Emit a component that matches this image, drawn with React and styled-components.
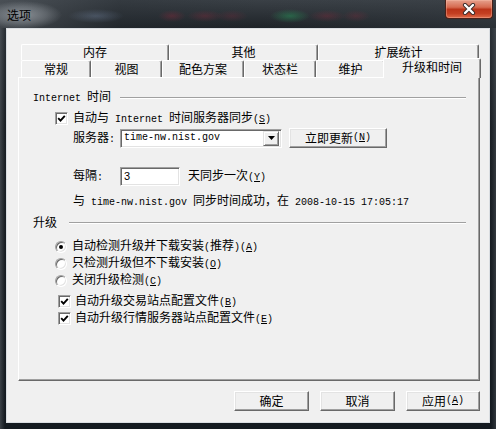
import styled, { createGlobalStyle } from 'styled-components';

const GlobalStyle = createGlobalStyle`
  html, body {
    margin: 0;
    padding: 0;
    background: #1a1f24;
  }
  body {
    font-family: "Noto Sans CJK SC", "Liberation Sans", sans-serif;
    font-size: 12px;
    color: #000;
  }
`

const topTabs = [
  { label: '内存', w: 148 },
  { label: '其他', w: 149 },
  { label: '扩展统计', w: 161 },
];

const frontTabs = [
  { label: '常规', w: 70 },
  { label: '视图', w: 71 },
  { label: '配色方案', w: 82 },
  { label: '状态栏', w: 72 },
  { label: '维护', w: 69 },
  { label: '升级和时间', w: 98, selected: true },
];

function Key({ k }) {
  return (
    <Mono>(<u>{k}</u>)</Mono>
  );
}

function Check({ checked }) {
  return (
    <CheckBox>
      {checked && (
        <svg width="9" height="9" viewBox="0 0 9 9">
          <polyline points="1.2,4.2 3.5,6.6 7.8,1.8" fill="none" stroke="#000" strokeWidth="1.9" />
        </svg>
      )}
    </CheckBox>
  );
}

function App() {
  return (
    <>
      <GlobalStyle />
      <Window>
        <TitleBar>
          <Title>选项</Title>
          <CloseButton>
            <svg width="16" height="12" viewBox="0 0 16 12">
              <path d="M4 2 L12 10 M12 2 L4 10" stroke="#3a2a28" strokeWidth="4.2" strokeLinecap="round" />
              <path d="M4 2 L12 10 M12 2 L4 10" stroke="#fff" strokeWidth="2.4" strokeLinecap="round" />
            </svg>
          </CloseButton>
        </TitleBar>
        <Client>
          <TabRow $h={16}>
            {topTabs.map(t => (
              <Tab key={t.label} $w={t.w} $h={16}>{t.label}</Tab>
            ))}
          </TabRow>
          <TabRow $h={17}>
            {frontTabs.map(t => (
              <Tab key={t.label} $w={t.w} $h={17} $selected={t.selected}>{t.label}</Tab>
            ))}
          </TabRow>
          <Panel>
            <GroupHeader>
              <span><Mono>Internet </Mono>时间</span>
              <Rule $gap={9} />
            </GroupHeader>

            <Row $indent={36} $h={16} $mt={5} $gap={5}>
              <Check checked />
              <span>自动与<Mono> Internet </Mono>时间服务器同步<Key k="S" /></span>
            </Row>

            <Row $indent={54} $h={20} $mt={2}>
              <FieldLabel>服务器<Mono>:</Mono></FieldLabel>
              <Combo>
                <ComboText>time-nw.nist.gov</ComboText>
                <DropButton>
                  <svg width="7" height="4" viewBox="0 0 7 4">
                    <polygon points="0,0 7,0 3.5,4" fill="#000" />
                  </svg>
                </DropButton>
              </Combo>
              <PushButton $w={98} $ml={7}>立即更新<Key k="N" /></PushButton>
            </Row>

            <Row $indent={54} $h={20} $mt={18}>
              <FieldLabel>每隔<Mono>:</Mono></FieldLabel>
              <TextInput>3</TextInput>
              <Suffix>天同步一次<Key k="Y" /></Suffix>
            </Row>

            <Row $indent={54} $h={16} $mt={7}>
              <span>与<Mono> time-nw.nist.gov </Mono>同步时间成功，在<Mono> 2008-10-15 17:05:17</Mono></span>
            </Row>

            <GroupHeader $mt={5}>
              <span>升级</span>
              <Rule $gap={12} />
            </GroupHeader>

            <Row $indent={36} $h={17} $mt={8} $gap={5}>
              <Radio $checked />
              <span>自动检测升级并下载安装<Mono>(</Mono>推荐<Mono>)</Mono><Key k="A" /></span>
            </Row>
            <Row $indent={36} $h={17} $gap={5}>
              <Radio />
              <span>只检测升级但不下载安装<Key k="O" /></span>
            </Row>
            <Row $indent={36} $h={17} $gap={5}>
              <Radio />
              <span>关闭升级检测<Key k="C" /></span>
            </Row>

            <Row $indent={39} $h={17} $mt={4} $gap={4}>
              <Check checked />
              <span>自动升级交易站点配置文件<Key k="B" /></span>
            </Row>
            <Row $indent={39} $h={17} $gap={4}>
              <Check checked />
              <span>自动升级行情服务器站点配置文件<Key k="E" /></span>
            </Row>
          </Panel>

          <ButtonBar>
            <PushButton $w={75}>确定</PushButton>
            <PushButton $w={75}>取消</PushButton>
            <PushButton $w={74}>应用<Key k="A" /></PushButton>
          </ButtonBar>
        </Client>
      </Window>
    </>
  );
}

const Window = styled.div`
  width: 496px;
  height: 429px;
  box-sizing: border-box;
  padding: 0 6px 6px 6px;
  display: flex;
  flex-direction: column;
  border-radius: 6px 6px 0 0;
  background:
    linear-gradient(90deg, rgba(90,96,102,.55) 0px, rgba(0,0,0,0) 5px, rgba(0,0,0,0) 491px, rgba(90,96,102,.4) 496px),
    linear-gradient(180deg, #2f353b 0%, #1b2025 30%, #141a20 100%);
`

const TitleBar = styled.div`
  height: 28px;
  display: flex;
  justify-content: space-between;
  align-items: flex-start;
  margin: 0 -6px;
  padding: 0 3px 0 7px;
  background:
    radial-gradient(ellipse 40px 14px at 22px 15px, rgba(150,156,162,.85), rgba(150,156,162,.4) 60%, transparent),
    radial-gradient(ellipse 28px 7px at 96px 16px, rgba(120,140,170,.35), transparent),
    radial-gradient(ellipse 14px 6px at 172px 16px, rgba(150,40,60,.35), transparent),
    radial-gradient(ellipse 18px 6px at 205px 16px, rgba(150,40,60,.3), transparent),
    radial-gradient(ellipse 16px 6px at 232px 16px, rgba(140,40,60,.25), transparent),
    radial-gradient(ellipse 20px 7px at 290px 16px, rgba(40,150,90,.5), transparent),
    radial-gradient(ellipse 18px 6px at 327px 16px, rgba(150,40,60,.3), transparent),
    radial-gradient(ellipse 14px 6px at 356px 16px, rgba(150,40,60,.25), transparent),
    linear-gradient(90deg, rgba(80,86,92,.7) 0px, rgba(40,46,52,.3) 120px, rgba(20,25,30,0) 260px, rgba(60,66,72,.4) 496px),
    linear-gradient(180deg, #3a4046 0%, #1e2328 100%);
`

const Title = styled.div`
  font-size: 12px;
  line-height: 14px;
  margin-top: 8px;
  color: #000;
`

const CloseButton = styled.div`
  width: 48px;
  height: 19px;
  box-sizing: border-box;
  display: flex;
  align-items: center;
  justify-content: center;
  border: 1px solid #4a2018;
  border-top: none;
  border-radius: 0 0 4px 4px;
  background: linear-gradient(180deg, #e6a08c 0%, #d66a50 40%, #bb3419 52%, #c43f22 75%, #de6a48 100%);
  box-shadow: inset 0 0 0 1px rgba(255,200,180,.35);
`

const Client = styled.div`
  flex: 1;
  display: flex;
  flex-direction: column;
  box-sizing: border-box;
  background: #f0f0f0;
  border: 1px solid #d9dde1;
  padding: 15px 9px 0 11px;
`

const TabRow = styled.div`
  height: ${p => p.$h}px;
  display: flex;
  align-items: flex-end;
  padding-left: 3px;
`

const Tab = styled.div`
  box-sizing: border-box;
  width: ${p => p.$w}px;
  height: ${p => (p.$selected ? 20 : p.$h)}px;
  margin: ${p => (p.$selected ? '0 -2px -1px -2px' : '0')};
  padding-bottom: ${p => (p.$selected ? 3 : 1)}px;
  position: relative;
  z-index: ${p => (p.$selected ? 2 : 0)};
  display: flex;
  align-items: center;
  justify-content: center;
  line-height: 14px;
  background: #f0f0f0;
  border: 1px solid #fff;
  border-bottom: none;
  border-right-color: #696969;
  border-radius: 2px 2px 0 0;
  box-shadow: inset -1px 0 0 #a0a0a0;
`

const Panel = styled.div`
  position: relative;
  z-index: 1;
  height: 304px;
  box-sizing: border-box;
  border: 1px solid #fff;
  border-right-color: #696969;
  border-bottom-color: #696969;
  box-shadow: inset -1px -1px 0 #a0a0a0;
  padding-top: 11px;
  display: flex;
  flex-direction: column;
`

const GroupHeader = styled.div`
  height: 16px;
  margin-top: ${p => p.$mt || 0}px;
  padding: 0 13px 0 14px;
  display: flex;
  align-items: center;
  line-height: 16px;
  white-space: nowrap;
`

const Rule = styled.div`
  flex: 1;
  margin-left: ${p => p.$gap}px;
  height: 1px;
  background: #a0a0a0;
  box-shadow: 0 1px 0 #fff;
`

const Row = styled.div`
  height: ${p => p.$h}px;
  margin-top: ${p => p.$mt || 0}px;
  padding-left: ${p => p.$indent}px;
  display: flex;
  align-items: center;
  gap: ${p => p.$gap || 0}px;
  line-height: 16px;
  white-space: nowrap;
`

const Mono = styled.span`
  font-family: "Liberation Mono", monospace;
  font-size: 10px;
  white-space: pre;
`

const CheckBox = styled.span`
  width: 13px;
  height: 13px;
  box-sizing: border-box;
  display: flex;
  align-items: center;
  justify-content: center;
  background: #fff;
  border: 1px solid;
  border-color: #a0a0a0 #fff #fff #a0a0a0;
  box-shadow: inset 1px 1px 0 #696969, inset -1px -1px 0 #e3e3e3;
  flex-shrink: 0;
`

const Radio = styled.span`
  width: 12px;
  height: 12px;
  box-sizing: border-box;
  border-radius: 50%;
  border: 1px solid;
  border-color: #a0a0a0 #fff #fff #a0a0a0;
  box-shadow: inset 1px 1px 0 #696969, inset -1px -1px 0 #e3e3e3;
  background: #fff;
  display: flex;
  align-items: center;
  justify-content: center;
  flex-shrink: 0;
  &::after {
    content: "";
    width: 4px;
    height: 4px;
    border-radius: 50%;
    background: #000;
    display: ${p => (p.$checked ? 'block' : 'none')};
  }
`

const FieldLabel = styled.span`
  width: 47px;
`

const Sunken = styled.div`
  box-sizing: border-box;
  background: #fff;
  border: 1px solid;
  border-color: #a0a0a0 #fff #fff #a0a0a0;
  box-shadow: inset 1px 1px 0 #696969, inset -1px -1px 0 #e3e3e3;
`

const Combo = styled(Sunken)`
  width: 162px;
  height: 19px;
  display: flex;
  align-items: center;
  padding: 2px 2px 2px 3px;
`

const ComboText = styled.span`
  flex: 1;
  font-family: "Liberation Mono", monospace;
  font-size: 10px;
`

const DropButton = styled.div`
  width: 16px;
  height: 15px;
  box-sizing: border-box;
  display: flex;
  align-items: center;
  justify-content: center;
  background: #f0f0f0;
  border: 1px solid;
  border-color: #e3e3e3 #696969 #696969 #e3e3e3;
  box-shadow: inset 1px 1px 0 #fff, inset -1px -1px 0 #a0a0a0;
`

const TextInput = styled(Sunken)`
  width: 60px;
  height: 19px;
  padding: 2px 3px;
  font-family: "Liberation Sans", sans-serif;
  font-size: 11px;
  line-height: 13px;
`

const Suffix = styled.span`
  margin-left: 8px;
`

const PushButton = styled.div`
  width: ${p => p.$w}px;
  height: 20px;
  margin-left: ${p => p.$ml || 0}px;
  box-sizing: border-box;
  display: flex;
  align-items: center;
  justify-content: center;
  line-height: 16px;
  white-space: nowrap;
  background: #f0f0f0;
  border: 1px solid;
  border-color: #fff #696969 #696969 #fff;
  box-shadow: inset -1px -1px 0 #a0a0a0, inset 1px 1px 0 #e3e3e3;
`

const ButtonBar = styled.div`
  margin-top: 10px;
  display: flex;
  justify-content: flex-end;
  gap: 11px;
`

export default App
